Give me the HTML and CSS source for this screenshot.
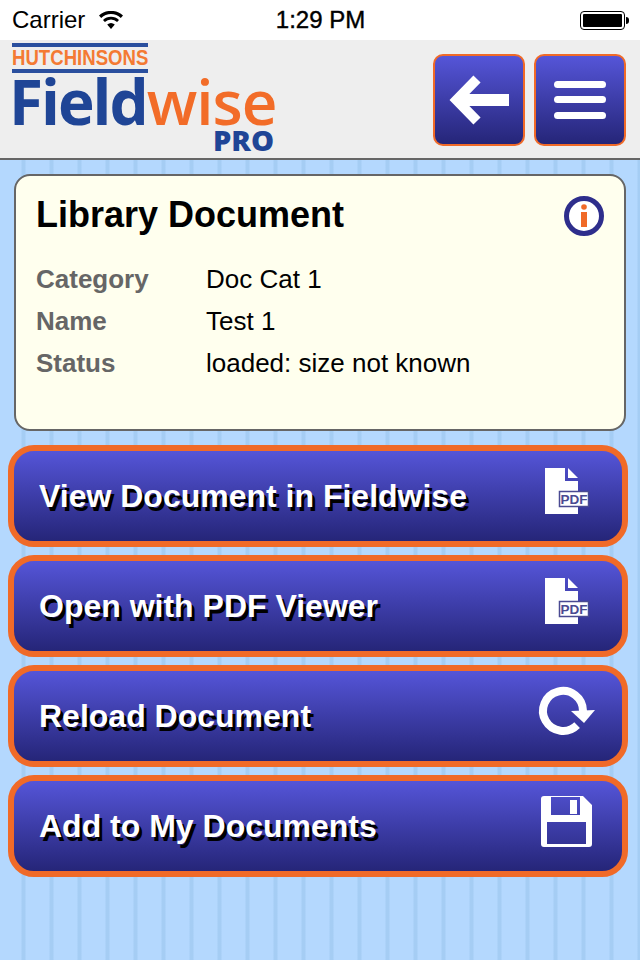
FILE: index.html
```html
<!DOCTYPE html>
<html lang="en">
<head>
    <meta charset="UTF-8">
    <meta name="viewport" content="width=device-width, initial-scale=1.0">
    <title>Library Document</title>
    <link rel="stylesheet" href="styles.css">
</head>
<body>
    <div class="status-bar">
        <div class="carrier">
            <span>Carrier</span>
            <svg class="wifi" viewBox="0 0 24 18">
                <path d="M12 18 L8.2 13.6 A6 6 0 0 1 15.8 13.6 Z"/>
                <path d="M5.9 11 L4 8.9 A11.5 11.5 0 0 1 20 8.9 L18.1 11 A8.7 8.7 0 0 0 5.9 11 Z"/>
                <path d="M2.2 6.9 L0 4.6 A17.5 17.5 0 0 1 24 4.6 L21.8 6.9 A14.4 14.4 0 0 0 2.2 6.9 Z"/>
            </svg>
        </div>
        <div class="time">1:29 PM</div>
        <div class="battery"><span class="battery-level"></span></div>
    </div>

    <div class="header">
        <div class="logo">
            <div class="logo-top"><span class="logo-top-text">HUTCHINSONS</span></div>
            <div class="logo-name">Field<span class="logo-orange">wise</span></div>
            <div class="logo-pro">PRO</div>
        </div>
        <div class="nav">
            <button class="nav-button">
                <svg viewBox="0 0 88 88">
                    <path d="M74 44 H24" fill="none" stroke="#fff" stroke-width="12"/>
                    <path d="M42 23 L21.5 44 L42 65" fill="none" stroke="#fff" stroke-width="10"/>
                </svg>
            </button>
            <button class="nav-button">
                <svg viewBox="0 0 88 88">
                    <rect x="18" y="25" width="52" height="7" rx="3.5" fill="#fff"/>
                    <rect x="18" y="40" width="52" height="7" rx="3.5" fill="#fff"/>
                    <rect x="18" y="56" width="52" height="7" rx="3.5" fill="#fff"/>
                </svg>
            </button>
        </div>
    </div>

    <div class="content">
        <div class="card">
            <div class="card-head">
                <h2>Library Document</h2>
                <svg class="info" viewBox="0 0 40 40">
                    <circle cx="20" cy="20" r="17.5" fill="#fff" stroke="#2e2e8c" stroke-width="5"/>
                    <circle cx="20" cy="11" r="2.8" fill="#f06a28"/>
                    <rect x="17" y="16" width="6" height="15" fill="#f06a28"/>
                </svg>
            </div>
            <div class="details">
                <span class="label">Category</span><span>Doc Cat 1</span>
                <span class="label">Name</span><span>Test 1</span>
                <span class="label">Status</span><span>loaded: size not known</span>
            </div>
        </div>

        <div class="actions">
            <button class="action">
                <span>View Document in Fieldwise</span>
                <svg viewBox="0 0 60 70">
                    <path d="M9 7 H29 V20 H42 V53 H9 Z" fill="#fff"/>
                    <path d="M32 7 L42 17 H32 Z" fill="#fff"/>
                    <rect x="23.5" y="30.5" width="29" height="15" fill="#fff" stroke="#4a4a92" stroke-width="1.5"/>
                    <text class="pdf" x="38" y="43" text-anchor="middle">PDF</text>
                </svg>
            </button>
            <button class="action">
                <span>Open with PDF Viewer</span>
                <svg viewBox="0 0 60 70">
                    <path d="M9 7 H29 V20 H42 V53 H9 Z" fill="#fff"/>
                    <path d="M32 7 L42 17 H32 Z" fill="#fff"/>
                    <rect x="23.5" y="30.5" width="29" height="15" fill="#fff" stroke="#4a4a92" stroke-width="1.5"/>
                    <text class="pdf" x="38" y="43" text-anchor="middle">PDF</text>
                </svg>
            </button>
            <button class="action">
                <span>Reload Document</span>
                <svg viewBox="0 0 60 70">
                    <path d="M47 30 A20 20 0 1 0 41.1 44.1" fill="none" stroke="#fff" stroke-width="8"/>
                    <path d="M35 30 L59 29 L48 42 Z" fill="#fff"/>
                </svg>
            </button>
            <button class="action">
                <span>Add to My Documents</span>
                <svg viewBox="0 0 60 70">
                    <path fill="#fff" fill-rule="evenodd" d="M8 5 H47 L56 14 V53 Q56 56 53 56 H8 Q5 56 5 53 V8 Q5 5 8 5 Z M15 6 V24 H44 V6 Z M34 9 H41 V23 H34 Z M11 31 V53 H50 V31 Z"/>
                </svg>
            </button>
        </div>
    </div>
</body>
</html>
```

FILE: styles.css
```css
html,body{
    margin: 0;
    padding: 0;
}
body{
    width: 640px;
    height: 960px;
    overflow: hidden;
    font-family: "Liberation Sans", Arial, sans-serif;
    background-color: #b4d8fe;
    background-image: repeating-linear-gradient(90deg, #b4d8fe 0, #b4d8fe 21px, #a5cdf4 22px, #a5cdf4 25px, #b4d8fe 26px, #b4d8fe 28px);
}
.status-bar{
    height: 40px;
    background-color: white;
    display: flex;
    align-items: center;
    justify-content: space-between;
    padding: 0 11px 0 12px;
    box-sizing: border-box;
    font-size: 24px;
    color: black;
}
.carrier{
    display: flex;
    align-items: center;
    gap: 14px;
    width: 200px;
}
.wifi{
    width: 24px;
    height: 18px;
}
.time{
    -webkit-text-stroke: 0.4px black;
}
.battery{
    width: 200px;
    display: flex;
    justify-content: flex-end;
    position: relative;
}
.battery-level{
    width: 39px;
    height: 13px;
    background-color: black;
    border: 2px solid white;
    outline: 1px solid black;
    border-radius: 3px;
    margin-right: 5px;
}
.battery::after{
    content: "";
    position: absolute;
    right: 0;
    top: 5px;
    width: 3px;
    height: 7px;
    background-color: black;
    border-radius: 0 3px 3px 0;
}
.header{
    height: 120px;
    box-sizing: border-box;
    background-color: #eeeeee;
    border-bottom: 2px solid #666;
    display: flex;
    justify-content: space-between;
    padding: 14px 14px 0 12px;
}
.logo{
    width: 262px;
    margin-top: -11px;
    display: flex;
    flex-direction: column;
}
.logo-top{
    width: 136px;
    height: 22px;
    border-top: 4px solid #2a4f9e;
    border-bottom: 4px solid #2a4f9e;
    font-family: "Liberation Sans", sans-serif;
    font-weight: bold;
    font-size: 22px;
    line-height: 22px;
    color: #f47a33;
    white-space: nowrap;
}
.logo-top-text{
    display: inline-block;
    transform-origin: left center;
    transform: scaleX(0.845);
}
.logo-name{
    font-family: "Open Sans", sans-serif;
    font-size: 62px;
    line-height: 50px;
    font-weight: 700;
    letter-spacing: -2px;
    color: #1f4596;
    white-space: nowrap;
    padding-top: 3px;
    margin-left: -3px;
}
.logo-orange{
    color: #f26c28;
    font-weight: 600;
    letter-spacing: -1px;
}
.logo-pro{
    font-family: "Open Sans", sans-serif;
    text-align: right;
    font-size: 29px;
    line-height: 26px;
    font-weight: 800;
    color: #1f4596;
    margin-top: 1px;
}
.nav{
    display: flex;
    gap: 9px;
}
.nav-button{
    width: 92px;
    height: 92px;
    padding: 0;
    border: 2px solid #f06a28;
    border-radius: 10px;
    background: linear-gradient(#5555d8, #252578);
}
.nav-button svg{
    display: block;
    width: 88px;
    height: 88px;
}
.content{
    padding: 14px 12px 0 8px;
}
.card{
    margin: 0 2px 0 6px;
    height: 257px;
    box-sizing: border-box;
    padding: 16px 20px 0 20px;
    background-color: #ffffee;
    border: 2px solid #666;
    border-radius: 16px;
}
.card-head{
    display: flex;
    justify-content: space-between;
    align-items: flex-start;
}
.card-head h2{
    margin: 0;
    font-size: 36px;
    line-height: 46px;
    color: black;
}
.info{
    width: 40px;
    height: 40px;
    margin-top: 4px;
}
.details{
    display: grid;
    grid-template-columns: 170px 1fr;
    grid-auto-rows: 42px;
    margin-top: 20px;
    font-size: 26px;
    line-height: 42px;
    color: black;
}
.label{
    font-weight: bold;
    color: #666;
}
.actions{
    display: flex;
    flex-direction: column;
    gap: 8px;
    margin-top: 14px;
}
.action{
    display: flex;
    align-items: center;
    justify-content: space-between;
    width: 620px;
    height: 102px;
    padding: 0 26px 0 25px;
    box-sizing: border-box;
    border: 6px solid #f06a28;
    border-radius: 26px;
    background: linear-gradient(#5555d8, #252578);
    font-family: "Liberation Sans", Arial, sans-serif;
    font-size: 32px;
    font-weight: bold;
    color: white;
    text-shadow: 3px 4px 0 black;
}
.action svg{
    width: 60px;
    height: 70px;
    flex-shrink: 0;
}
.pdf{
    font-family: "Liberation Sans", Arial, sans-serif;
    font-size: 13.5px;
    font-weight: bold;
    fill: #4a4a92;
    text-shadow: none;
}
```
